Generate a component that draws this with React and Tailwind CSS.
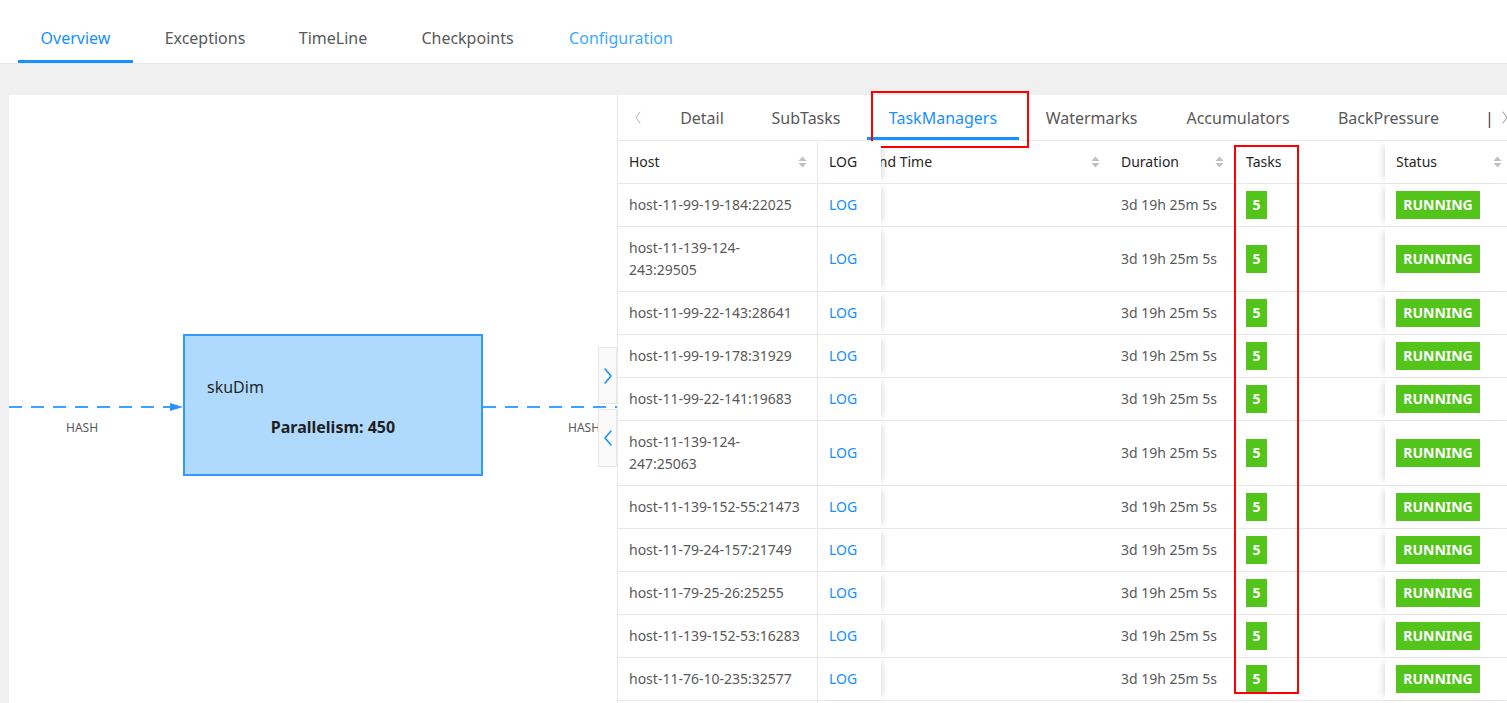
import React from "react";

const FONT = { fontFamily: '"Noto Sans", "Open Sans", Arial, sans-serif' };

const rows = [
  ["host-11-99-19-184:22025"],
  ["host-11-139-124-", "243:29505"],
  ["host-11-99-22-143:28641"],
  ["host-11-99-19-178:31929"],
  ["host-11-99-22-141:19683"],
  ["host-11-139-124-", "247:25063"],
  ["host-11-139-152-55:21473"],
  ["host-11-79-24-157:21749"],
  ["host-11-79-25-26:25255"],
  ["host-11-139-152-53:16283"],
  ["host-11-76-10-235:32577"],
];

function SortIcon() {
  return (
    <svg width="9" height="14" viewBox="0 0 9 14" className="shrink-0">
      <polygon points="0.5,6 4.5,1.5 8.5,6" fill="#bfbfbf" />
      <polygon points="0.5,8 4.5,12.5 8.5,8" fill="#bfbfbf" />
    </svg>
  );
}

function Chevron({ dir, color, w = 10, h = 16, sw = 1.5 }) {
  const d = dir === "right" ? `M2 1 L${w - 2} ${h / 2} L2 ${h - 1}` : `M${w - 2} 1 L2 ${h / 2} L${w - 2} ${h - 1}`;
  return (
    <svg width={w} height={h} viewBox={`0 0 ${w} ${h}`} className="shrink-0">
      <path d={d} stroke={color} strokeWidth={sw} fill="none" strokeLinecap="round" strokeLinejoin="round" />
    </svg>
  );
}

function NavTabs() {
  const tabs = [
    { t: "Overview", c: "text-[#1890ff]", w: "w-[75px]", active: true },
    { t: "Exceptions", c: "text-[#595959]", w: "w-[84px]" },
    { t: "TimeLine", c: "text-[#595959]", w: "w-[72px]" },
    { t: "Checkpoints", c: "text-[#595959]", w: "w-[97px]" },
    { t: "Configuration", c: "text-[#40a9ff]", w: "w-[110px]" },
  ];
  return (
    <div className="h-[64px] shrink-0 bg-white border-b border-[#e8e8e8] flex pl-[18px] gap-[10px]">
      {tabs.map((x) => (
        <div key={x.t} className={`relative h-full flex items-center pt-[12px] px-[20px] text-[16px] ${x.c}`}>
          <span className={`${x.w} text-center whitespace-nowrap`}>{x.t}</span>
          {x.active && <div className="absolute left-0 right-0 bottom-0 h-[3px] bg-[#1890ff]" />}
        </div>
      ))}
    </div>
  );
}

function Graph() {
  return (
    <div className="w-[608px] shrink-0 bg-white relative overflow-hidden">
      <svg className="absolute left-0 top-0" width="608" height="608" viewBox="0 0 608 608">
        <line x1="0" y1="312" x2="163" y2="312" stroke="#3ea0ff" strokeWidth="2" strokeDasharray="13 9" />
        <polygon points="161,308 174,312 161,316" fill="#2a93fa" />
        <line x1="474" y1="312" x2="608" y2="312" stroke="#3ea0ff" strokeWidth="2" strokeDasharray="13 9" />
      </svg>
      <div className="absolute left-[57px] top-[325px] text-[12px] leading-[16px] text-[#595959]">HASH</div>
      <div className="absolute left-[559px] top-[325px] text-[12px] leading-[16px] text-[#595959]">HASH</div>
      <div className="absolute left-[174px] top-[239px] w-[300px] h-[142px] bg-[#afdafd] border-2 border-[#3399ff] flex flex-col pt-[40px]">
        <div className="pl-[22px] text-[16px] leading-[22px] text-[#262626]">skuDim</div>
        <div className="mt-[18px] text-center text-[16px] leading-[22px] font-bold text-[#1f1f1f]">Parallelism: 450</div>
      </div>
      <div className="absolute right-0 top-[252px] w-[19px] h-[57px] bg-[#fafafa] border border-[#e8e8e8] flex items-center justify-center">
        <Chevron dir="right" color="#1890ff" w={10} h={16} />
      </div>
      <div className="absolute right-0 top-[314px] w-[19px] h-[58px] bg-[#fafafa] border border-[#e8e8e8] flex items-center justify-center">
        <Chevron dir="left" color="#1890ff" w={10} h={16} />
      </div>
    </div>
  );
}

function SubTabs() {
  const tabs = [
    { t: "Detail", w: "w-[46px]" },
    { t: "SubTasks", w: "w-[72px]" },
    { t: "TaskManagers", w: "w-[112px]" },
    { t: "Watermarks", w: "w-[95px]" },
    { t: "Accumulators", w: "w-[108px]" },
    { t: "BackPressure", w: "w-[103px]" },
  ];
  return (
    <div className="h-[46px] shrink-0 border-b border-[#e8e8e8] flex items-stretch overflow-hidden">
      <div className="w-[41px] shrink-0 flex items-center pl-[16px]">
        <Chevron dir="left" color="#bfbfbf" w={8} h={13} sw={1.1} />
      </div>
      <div className="flex shrink-0 gap-[5px]">
        {tabs.map((x) => (
          <div
            key={x.t}
            className={`relative h-full flex items-center px-[20px] text-[16px] whitespace-nowrap ${x.t === "TaskManagers" ? "text-[#1890ff]" : "text-[#595959]"}`}
          >
            <span className={`${x.w} text-center`}>{x.t}</span>
            {x.t === "TaskManagers" && <div className="absolute left-0 right-0 bottom-0 h-[3px] bg-[#1890ff]" />}
          </div>
        ))}
      </div>
      <div className="shrink-0 flex items-center pl-[25px] gap-[7px]">
        <span className="text-[16px] text-[#434343]">|</span>
        <Chevron dir="right" color="#a6a6a6" w={8} h={13} sw={1.1} />
      </div>
    </div>
  );
}

function Table() {
  return (
    <div className="flex-1 min-h-0 overflow-hidden text-[14px] leading-[22px]">
      <div className="flex h-[43px] border-b border-[#e8e8e8] text-[#262626]">
        <div className="w-[200px] shrink-0 border-r border-[#e8e8e8] pl-[11px] pr-[10px] flex items-center justify-between bg-white">
          <span>Host</span>
          <SortIcon />
        </div>
        <div className="w-[63px] shrink-0 pl-[11px] flex items-center bg-white relative z-10 shadow-[6px_0_6px_-4px_rgba(0,0,0,0.13)]">LOG</div>
        <div className="w-[229px] shrink-0 pr-[10px] flex items-center justify-between">
          <span className="-ml-[10px]">End Time</span>
          <SortIcon />
        </div>
        <div className="w-[124px] shrink-0 pl-[11px] pr-[10px] flex items-center justify-between">
          <span>Duration</span>
          <SortIcon />
        </div>
        <div className="w-[151px] shrink-0 pl-[12px] flex items-center">Tasks</div>
        <div className="w-[122px] shrink-0 pl-[11px] pr-[5px] flex items-center justify-between bg-white relative z-10 shadow-[-6px_0_6px_-4px_rgba(0,0,0,0.13)]">
          <span>Status</span>
          <SortIcon />
        </div>
      </div>
      {rows.map((r, i) => (
        <div key={i} className={`flex border-b border-[#e8e8e8] ${r.length > 1 ? "h-[65px]" : "h-[43px]"}`}>
          <div className="w-[200px] shrink-0 border-r border-[#e8e8e8] px-[11px] flex flex-col justify-center bg-white text-[#595959] whitespace-nowrap">
            {r.map((l) => (
              <div key={l}>{l}</div>
            ))}
          </div>
          <div className="w-[63px] shrink-0 pl-[11px] flex items-center bg-white relative z-10 shadow-[6px_0_6px_-4px_rgba(0,0,0,0.13)] text-[#1890ff]">LOG</div>
          <div className="w-[229px] shrink-0" />
          <div className="w-[124px] shrink-0 pl-[11px] flex items-center text-[#595959] whitespace-nowrap">3d 19h 25m 5s</div>
          <div className="w-[151px] shrink-0 pl-[12px] flex items-center">
            <span className="w-[21px] h-[28px] bg-[#52c41a] text-white font-bold flex items-center justify-center">5</span>
          </div>
          <div className="w-[122px] shrink-0 pl-[11px] flex items-center bg-white relative z-10 shadow-[-6px_0_6px_-4px_rgba(0,0,0,0.13)]">
            <span className="w-[84px] h-[28px] bg-[#52c41a] text-white font-bold flex items-center justify-center">RUNNING</span>
          </div>
        </div>
      ))}
      <div className="flex h-[43px]">
        <div className="w-[200px] shrink-0 border-r border-[#e8e8e8] bg-white" />
        <div className="w-[63px] shrink-0 bg-white relative z-10 shadow-[6px_0_6px_-4px_rgba(0,0,0,0.13)]" />
        <div className="w-[504px] shrink-0" />
        <div className="w-[122px] shrink-0 bg-white relative z-10 shadow-[-6px_0_6px_-4px_rgba(0,0,0,0.13)]" />
      </div>
    </div>
  );
}

export default function App() {
  return (
    <div className="w-[1507px] h-[703px] overflow-hidden relative flex flex-col bg-white" style={FONT}>
      <NavTabs />
      <div className="flex-1 min-h-0 flex bg-[#f0f0f0] pt-[31px] pl-[9px]">
        <Graph />
        <div className="flex-1 min-w-0 bg-white border-l border-[#e8e8e8] flex flex-col overflow-hidden">
          <SubTabs />
          <Table />
        </div>
      </div>
      <div className="absolute left-[871px] top-[91px] w-[158px] h-[57px] border-2 border-[#ff0000] pointer-events-none" />
      <div className="absolute left-[1234px] top-[145px] w-[65px] h-[549px] border-2 border-[#ff0000] pointer-events-none" />
    </div>
  );
}
